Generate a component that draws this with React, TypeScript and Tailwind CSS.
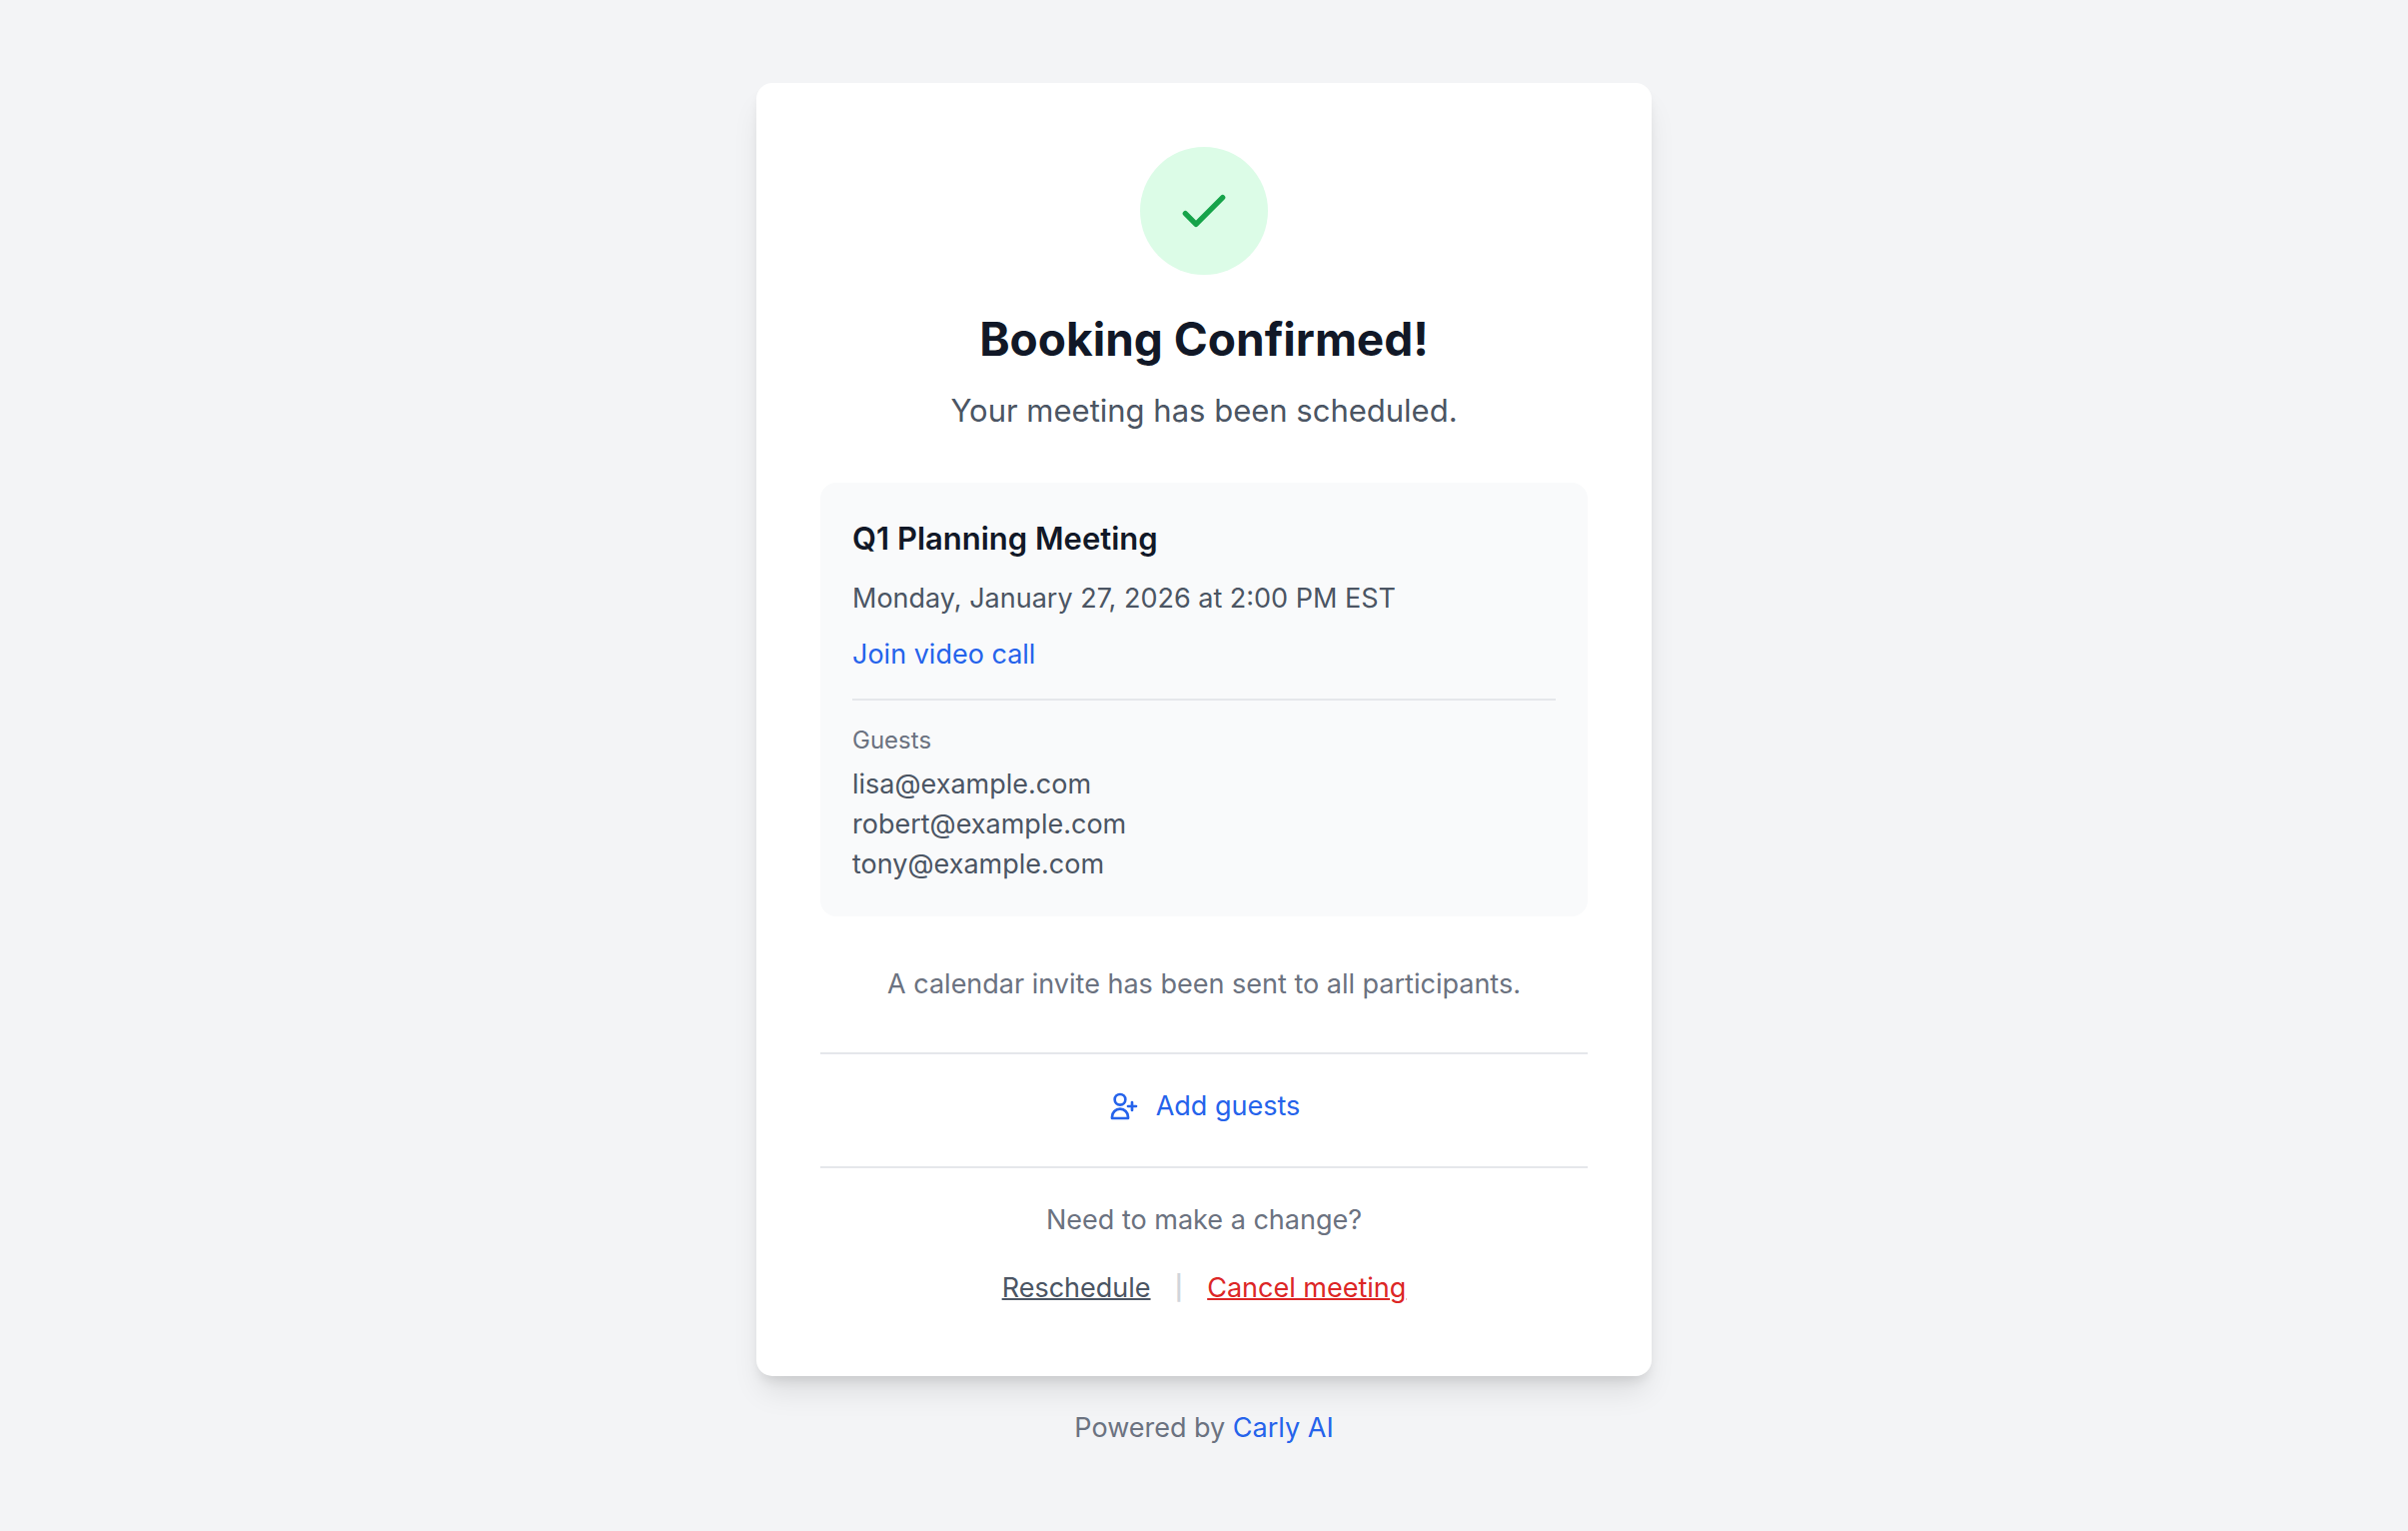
const guests = ["lisa@example.com", "robert@example.com", "tony@example.com"];

function CheckIcon() {
  return (
    <svg
      className="size-16 text-[#16a34a]"
      fill="none"
      stroke="currentColor"
      strokeWidth={2}
      strokeLinecap="round"
      strokeLinejoin="round"
      viewBox="0 0 24 24"
      aria-hidden="true"
    >
      <path d="M5 13l4 4L19 7" />
    </svg>
  );
}

function UserPlusIcon() {
  return (
    <svg
      className="size-8"
      fill="none"
      stroke="currentColor"
      strokeWidth={2}
      strokeLinecap="round"
      strokeLinejoin="round"
      viewBox="0 0 24 24"
      aria-hidden="true"
    >
      <path d="M18 9v3m0 0v3m0-3h3m-3 0h-3m-2-5a4 4 0 11-8 0 4 4 0 018 0zM3 20a6 6 0 0112 0v1H3v-1z" />
    </svg>
  );
}

function MeetingDetails() {
  return (
    <section className="mt-12 rounded-2xl bg-[#f9fafb] p-8 text-left">
      <h2 className="text-[31px] leading-12 font-semibold text-[#111827]">Q1 Planning Meeting</h2>
      <p className="mt-4">Monday, January 27, 2026 at 2:00 PM EST</p>
      <p className="mt-4">
        <a href="#join" className="text-[#2563eb]">
          Join video call
        </a>
      </p>
      <div className="mt-6 border-t-2 border-[#e5e7eb] pt-6">
        <h3 className="text-[24px] leading-8 text-[#6b7280]">Guests</h3>
        <ul className="mt-2">
          {guests.map((guest) => (
            <li key={guest}>{guest}</li>
          ))}
        </ul>
      </div>
    </section>
  );
}

export default function App() {
  return (
    <div className="flex min-h-screen flex-col items-center justify-center bg-[#f3f4f6] p-8 font-[Inter,sans-serif] text-[27px] leading-10 text-[#4b5563]">
      <main className="w-full max-w-4xl rounded-2xl bg-white p-16 text-center shadow-[0_20px_30px_-6px_rgba(0,0,0,0.1),0_8px_12px_-4px_rgba(0,0,0,0.1)]">
        <div className="mx-auto flex size-32 items-center justify-center rounded-full bg-[#dcfce7]">
          <CheckIcon />
        </div>
        <h1 className="mt-8 text-[46px] leading-16 font-bold text-[#111827]">Booking Confirmed!</h1>
        <p className="mt-4 text-[31px] leading-12">Your meeting has been scheduled.</p>

        <MeetingDetails />

        <p className="mt-12 text-[#6b7280]">A calendar invite has been sent to all participants.</p>

        <div className="mt-12 border-t-2 border-[#e5e7eb] pt-8 pb-10">
          <button type="button" className="mx-auto flex items-center gap-4 text-[#2563eb]">
            <UserPlusIcon />
            Add guests
          </button>
        </div>

        <div className="border-t-2 border-[#e5e7eb] pt-8">
          <p className="text-[#6b7280]">Need to make a change?</p>
          <div className="mt-6 flex items-center justify-center gap-6">
            <a href="#reschedule" className="underline decoration-2">
              Reschedule
            </a>
            <span className="text-[24px] leading-12 font-semibold text-[#d1d5db]">|</span>
            <a href="#cancel" className="text-[#dc2626] underline decoration-2">
              Cancel meeting
            </a>
          </div>
        </div>
      </main>

      <footer className="mt-8 text-[#6b7280]">
        Powered by{" "}
        <a href="#carly" className="text-[#2563eb]">
          Carly AI
        </a>
      </footer>
    </div>
  );
}
